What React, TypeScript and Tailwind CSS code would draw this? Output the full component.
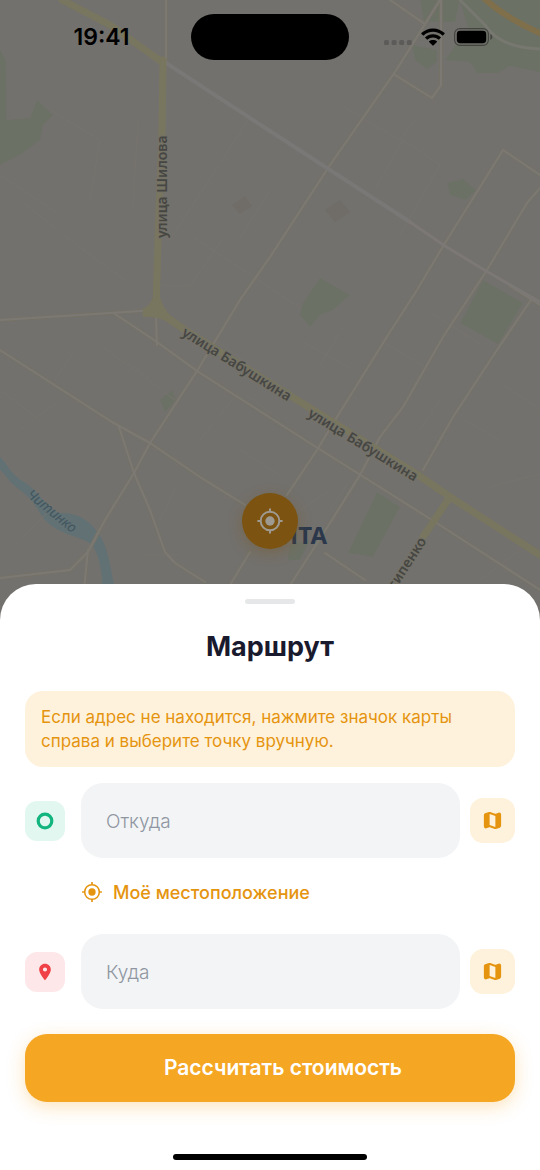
const mainRoads = [
  "M62 0L110 25L162 62",
  "M163 60L162 133L158 240L156 310L185 330L302 403L418 475L450 497L540 555",
  "M450 497L423 537",
];

const sideRoads = [
  "M166 0V62",
  "M0 320L110 313L156 310",
  "M115 314L157 342L197 371L316 447L432 520L540 590",
  "M156 316L157 345",
  "M0 350L112 422L150 443L200 477L245 505",
  "M119 427L134 473L150 510L165 552L175 563L205 582",
  "M440 0L412 45L395 72L330 165L270 257L240 300L197 371L150 443L134 473L105 520L88 552L70 570L0 578",
  "M88 550L84 590",
  "M395 75L432 98L441 85V0",
  "M390 0L425 24",
  "M540 175L503 150L477 192L445 243L417 290L388 335L337 417L317 450L287 495",
  "M540 188L527 203L487 270L443 337L403 407L380 437L360 475L330 523L287 590",
  "M510 286L540 305",
  "M533 297L497 350L453 417L423 470",
  "M423 537L393 590",
  "M325 553L365 580",
  "M250 552L230 585",
];

const lanes = [
  "M248 120L200 194L170 240",
  "M195 238L255 278L300 308",
  "M160 285L190 286L222 240",
  "M403 140L375 190M415 120L400 140L340 105M403 140L440 165L400 235",
  "M270 190L240 238M345 325L320 365M300 340L350 368",
  "M380 340L430 370M430 312L480 344M465 420L500 440",
  "M420 430L440 400M490 487L540 474M500 382L540 410",
  "M20 200L70 240L125 280M0 175L60 215",
  "M75 350L55 380M100 345L175 400M125 360L150 378",
  "M20 430L60 400M20 540L50 510M145 555H180M175 490L160 520",
  "M200 440L240 390L280 420M215 340L250 365",
  "M460 500L500 530M480 580L520 550M350 480L330 510",
  "M50 110L100 140L90 200M138 120L133 205",
  "M0 390L40 420M30 350L10 370",
  "M240 450L280 475M300 510L330 490",
];

const parks = [
  "M0 50L6 60L7 120L30 118L37 100L53 115L43 125L40 140L20 155L0 165Z",
  "M460 0H540V72L510 66L498 73L477 73L470 62L445 60L458 42L470 35Z",
  "M420 0H460L455 22H424Z",
  "M412 45L437 50V62L427 69L415 60Z",
  "M303 303L320 278L350 295L333 310L320 315L310 327L300 315Z",
  "M460 323L483 280L523 303L498 344Z",
  "M447 183L463 179L476 190L466 200L450 195Z",
  "M377 492L400 507L373 557L348 553Z",
  "M160 400L172 390L176 400L165 412Z",
  "M290 545L310 540L300 560L288 560Z",
];

function CityMap() {
  return (
    <svg
      className="absolute inset-0 h-full w-full"
      viewBox="0 0 540 1170"
      preserveAspectRatio="xMidYMin slice"
      aria-hidden="true"
    >
      <rect width="540" height="1170" fill="#73716d" />
      <g fill="#6c7166">
        {parks.map((d) => (
          <path key={d} d={d} />
        ))}
      </g>
      <path d="M325 210L340 200L350 212L335 222Z M232 205L245 196L252 206L240 214Z" fill="#706d68" />
      <path
        d="M0 457C8 464 10 474 24 482C38 490 46 508 60 513C76 512 90 520 98 533C108 545 110 565 115 590H102C103 572 98 552 92 545C82 536 60 536 45 520C38 512 36 502 20 490C8 482 6 474 0 470Z"
        fill="#627174"
      />
      <g fill="none" strokeLinejoin="round" strokeLinecap="round">
        <g stroke="#77746f" strokeWidth="1">
          {lanes.map((d) => (
            <path key={d} d={d} />
          ))}
        </g>
        <path d="M460 0L485 25Q500 48 540 49" stroke="#77786f" strokeWidth="3" />
        <g stroke="#747267" strokeWidth="4">
          {sideRoads.map((d) => (
            <path key={d} d={d} />
          ))}
        </g>
        <g stroke="#7c7974" strokeWidth="2">
          {sideRoads.map((d) => (
            <path key={d} d={d} />
          ))}
        </g>
        <path d="M166 63L270 131L330 170L410 222" stroke="#7a7777" strokeWidth="4" />
        <path d="M410 222L445 246L486 271L540 302" stroke="#7b7876" strokeWidth="3" />
        <g stroke="#79765f" strokeWidth="7">
          {mainRoads.map((d) => (
            <path key={d} d={d} />
          ))}
        </g>
        <path d="M484 -2Q505 18 544 35" stroke="#7f6f4b" strokeWidth="6" />
      </g>
      <path d="M154 292H159Q161 307 172 317L164 320Q154 316 143 317V309Q153 304 154 292Z" fill="#79765f" />
      <g
        className="font-['Noto_Sans',sans-serif] text-[14px] font-semibold"
        fill="#464643"
        stroke="#747268"
        strokeWidth="2"
        paintOrder="stroke"
      >
        <text transform="translate(167 238) rotate(-90)">улица Шилова</text>
        <text transform="translate(181 335) rotate(32)">улица Бабушкина</text>
        <text transform="translate(307 416) rotate(31.5)">улица Бабушкина</text>
        <text transform="translate(427 541) rotate(-57)" textAnchor="end">
          Осипенко
        </text>
      </g>
      <text
        className="font-['Noto_Sans',sans-serif] text-[14px] italic"
        fill="#41565f"
        transform="translate(26 496) rotate(39)"
      >
        Читинко
      </text>
      <text
        className="font-['Noto_Sans',sans-serif] text-[24px] font-bold"
        fill="#2b384b"
        x="327"
        y="544"
        textAnchor="end"
      >
        ЧИТА
      </text>
    </svg>
  );
}

function LocateIcon({ className }: { className: string }) {
  return (
    <svg className={className} viewBox="0 0 24 24" fill="none" stroke="currentColor" aria-hidden="true">
      <circle cx="12" cy="12" r="8" strokeWidth="1.7" />
      <circle cx="12" cy="12" r="4" fill="currentColor" stroke="none" />
      <path d="M12 1.2V4M12 20v2.8M1.2 12H4M20 12h2.8" strokeWidth="1.8" />
    </svg>
  );
}

function MapIcon() {
  return (
    <svg className="size-[23px]" viewBox="0 0 24 24" fill="currentColor" aria-hidden="true">
      <path
        fillRule="evenodd"
        d="M14.65 4.98l-5-1.75c-.42-.15-.88-.15-1.3-.01L4.36 4.56C3.55 4.84 3 5.6 3 6.46v11.85c0 1.41 1.41 2.37 2.72 1.86l2.93-1.14c.22-.09.47-.09.69-.01l5 1.75c.42.15.88.15 1.3.01l3.99-1.34c.81-.27 1.36-1.04 1.36-1.9V5.69c0-1.41-1.41-2.37-2.72-1.86l-2.93 1.14c-.22.08-.46.09-.69.01zM15 18.89l-6-2.11V5.11l6 2.11v11.67z"
      />
    </svg>
  );
}

function PinIcon() {
  return (
    <svg className="size-5 text-[#ef4146]" viewBox="0 0 24 24" fill="currentColor" aria-hidden="true">
      <path
        fillRule="evenodd"
        d="M12 2C8.13 2 5 5.13 5 9c0 5.25 7 13 7 13s7-7.750 7-13c0-3.870-3.130-7-7-7zm0 9.500a2.500 2.500 0 1 1 0-5 2.500 2.500 0 0 1 0 5z"
      />
    </svg>
  );
}

function StatusBar() {
  return (
    <header className="relative grid grid-cols-[minmax(0,1fr)_158px_minmax(0,1fr)] items-center pt-[14px] text-black">
      <time className="pl-3 text-center text-[23px] leading-[46px] font-semibold">19:41</time>
      <div className="h-[46px] rounded-full bg-black" />
      <div className="flex items-center justify-end gap-[9px] pr-[47px]">
        <svg className="mt-[10px] h-[5px] w-7 shrink-0" viewBox="0 0 28 5" fill="#5c5b59" aria-hidden="true">
          <rect width="5" height="5" rx="1.5" />
          <rect x="7.6" width="5" height="5" rx="1.5" />
          <rect x="15.2" width="5" height="5" rx="1.5" />
          <rect x="22.8" width="5" height="5" rx="1.5" />
        </svg>
        <svg className="h-[18px] w-6 shrink-0" viewBox="0 0 24 18" aria-hidden="true">
          <path d="M12 0.400C16.500 0.400 20.600 2.200 23.600 5.100Q23.900 5.400 23.600 5.700L21.900 7.400Q21.600 7.700 21.300 7.400C18.800 5.100 15.600 3.800 12 3.800S5.200 5.100 2.700 7.400Q2.400 7.700 2.100 7.400L.4 5.700Q.1 5.400.4 5.100C3.400 2.200 7.500.4 12 .4Z" />
          <path d="M12 6.200C15 6.200 17.700 7.300 19.800 9.200Q20.100 9.500 19.800 9.800L18 11.500Q17.700 11.800 17.400 11.500C15.900 10.200 14.100 9.500 12 9.500S8.100 10.200 6.600 11.500Q6.300 11.800 6 11.500L4.200 9.800Q3.900 9.500 4.200 9.200C6.300 7.300 9 6.200 12 6.200Z" />
          <path d="M12 11.900C13.500 11.900 14.900 12.400 15.900 13.300Q16.200 13.600 15.900 13.900L12.400 17.400Q12 17.700 11.600 17.400L8.100 13.900Q7.800 13.600 8.100 13.300C9.100 12.400 10.500 11.900 12 11.900Z" />
        </svg>
        <svg className="h-[18px] w-[39px] shrink-0" viewBox="0 0 39 18" aria-hidden="true">
          <rect x=".6" y=".6" width="33.800" height="16.800" rx="5.400" fill="none" stroke="#454442" strokeWidth="1.2" />
          <rect x="2.800" y="2.800" width="29.400" height="12.400" rx="3.400" />
          <path d="M36.400 6v6q2-1 2-3t-2-3Z" fill="#454442" />
        </svg>
      </div>
    </header>
  );
}

function MapButton({ label }: { label: string }) {
  return (
    <button
      type="button"
      aria-label={label}
      className="flex size-[45px] shrink-0 items-center justify-center rounded-[13px] bg-[#fff2dc] text-[#e5940f]"
    >
      <MapIcon />
    </button>
  );
}

function AddressInput({ id, placeholder }: { id: string; placeholder: string }) {
  return (
    <div className="min-w-0 flex-1 pr-[10px] pl-4">
      <input
        id={id}
        type="text"
        aria-label={placeholder}
        placeholder={placeholder}
        className="block h-[75px] w-full rounded-[22px] bg-[#f2f4f6] px-[25px] pt-[2px] text-[19px] text-[#1a1a2e] outline-none placeholder:font-light placeholder:text-[#8f96a1]"
      />
    </div>
  );
}

export default function App() {
  return (
    <div className="relative flex min-h-screen flex-col overflow-hidden bg-[#73716d] font-['Inter',sans-serif]">
      <CityMap />
      <StatusBar />
      <main className="relative flex flex-1 flex-col justify-end">
        <button
          type="button"
          aria-label="Моё местоположение"
          className="mx-auto mb-[35px] flex size-14 items-center justify-center rounded-full bg-[#7c5310] text-[#9f9a91] shadow-[0_4px_14px_rgba(124,83,16,0.35)]"
        >
          <LocateIcon className="size-7" />
        </button>

        <section className="rounded-t-[36px] bg-white px-[25px] pt-[15px] pb-[10px]">
          <div className="mx-auto h-[5px] w-[50px] rounded-full bg-[#e5e7e8]" />
          <h1 className="mt-[27px] text-center text-[27px] leading-8 font-bold text-[#1a1a2e]">Маршрут</h1>

          <p className="mt-7 rounded-[18px] bg-[#fff2dc] px-4 py-[14px] text-[17px] leading-6 text-[#e5940f]">
            Если адрес не находится, нажмите значок карты справа и выберите точку вручную.
          </p>

          <form onSubmit={(event) => event.preventDefault()}>
            <div className="mt-4 flex items-center">
              <label
                htmlFor="from"
                className="flex size-10 shrink-0 items-center justify-center rounded-xl bg-[#e2f7ef]"
              >
                <svg className="size-[18px]" viewBox="0 0 18 18" aria-hidden="true">
                  <circle cx="9" cy="9" r="6.8" fill="none" stroke="#12b57e" strokeWidth="3.2" />
                </svg>
              </label>
              <AddressInput id="from" placeholder="Откуда" />
              <MapButton label="Откуда" />
            </div>

            <button
              type="button"
              className="mt-4 mb-6 ml-14 flex h-9 items-center gap-[10px] text-[18px] font-medium text-[#e5940f]"
            >
              <LocateIcon className="size-[22px]" />
              Моё местоположение
            </button>

            <div className="flex items-center">
              <label
                htmlFor="to"
                className="flex size-10 shrink-0 items-center justify-center rounded-xl bg-[#fee7e8]"
              >
                <PinIcon />
              </label>
              <AddressInput id="to" placeholder="Куда" />
              <MapButton label="Куда" />
            </div>

            <button
              type="submit"
              className="mt-[25px] flex h-[68px] w-full items-center justify-center rounded-[22px] bg-[#f5a623] pl-[26px] text-[21px] font-semibold text-white shadow-[0_5px_18px_rgba(245,166,35,0.3)]"
            >
              Рассчитать стоимость
            </button>
          </form>

          <div className="mx-auto mt-[52px] h-[6px] w-[194px] rounded-full bg-black" />
        </section>
      </main>
    </div>
  );
}
